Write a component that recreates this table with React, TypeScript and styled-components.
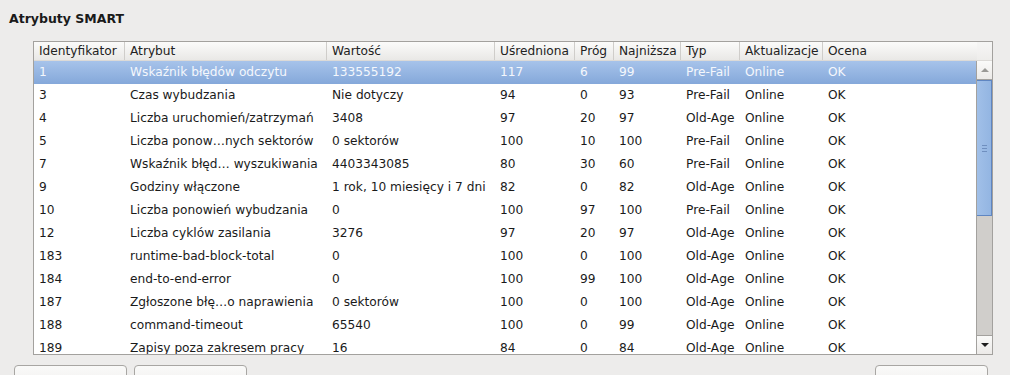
import React from "react";
import styled, { createGlobalStyle } from "styled-components";

type Attr = {
    id: string,
    name: string,
    value: string,
    avg: string,
    thr: string,
    low: string,
    type: string,
    upd: string,
    rating: string
}

const rows: Attr[] = [
    { id: "1", name: "Wskaźnik błędów odczytu", value: "133555192", avg: "117", thr: "6", low: "99", type: "Pre-Fail", upd: "Online", rating: "OK" },
    { id: "3", name: "Czas wybudzania", value: "Nie dotyczy", avg: "94", thr: "0", low: "93", type: "Pre-Fail", upd: "Online", rating: "OK" },
    { id: "4", name: "Liczba uruchomień/zatrzymań", value: "3408", avg: "97", thr: "20", low: "97", type: "Old-Age", upd: "Online", rating: "OK" },
    { id: "5", name: "Liczba ponow…nych sektorów", value: "0 sektorów", avg: "100", thr: "10", low: "100", type: "Pre-Fail", upd: "Online", rating: "OK" },
    { id: "7", name: "Wskaźnik błęd… wyszukiwania", value: "4403343085", avg: "80", thr: "30", low: "60", type: "Pre-Fail", upd: "Online", rating: "OK" },
    { id: "9", name: "Godziny włączone", value: "1 rok, 10 miesięcy i 7 dni", avg: "82", thr: "0", low: "82", type: "Old-Age", upd: "Online", rating: "OK" },
    { id: "10", name: "Liczba ponowień wybudzania", value: "0", avg: "100", thr: "97", low: "100", type: "Pre-Fail", upd: "Online", rating: "OK" },
    { id: "12", name: "Liczba cyklów zasilania", value: "3276", avg: "97", thr: "20", low: "97", type: "Old-Age", upd: "Online", rating: "OK" },
    { id: "183", name: "runtime-bad-block-total", value: "0", avg: "100", thr: "0", low: "100", type: "Old-Age", upd: "Online", rating: "OK" },
    { id: "184", name: "end-to-end-error", value: "0", avg: "100", thr: "99", low: "100", type: "Old-Age", upd: "Online", rating: "OK" },
    { id: "187", name: "Zgłoszone błę…o naprawienia", value: "0 sektorów", avg: "100", thr: "0", low: "100", type: "Old-Age", upd: "Online", rating: "OK" },
    { id: "188", name: "command-timeout", value: "65540", avg: "100", thr: "0", low: "99", type: "Old-Age", upd: "Online", rating: "OK" },
    { id: "189", name: "Zapisy poza zakresem pracy", value: "16", avg: "84", thr: "0", low: "84", type: "Old-Age", upd: "Online", rating: "OK" },
]

const headers = ["Identyfikator", "Atrybut", "Wartość", "Uśredniona", "Próg", "Najniższa", "Typ", "Aktualizacje", "Ocena"]

const COLS = "91px 202px 168px 80px 39px 67px 59px 83px 1fr"

export default function App() {
    return (
        <Page>
            <GlobalStyle />
            <Title>Atrybuty SMART</Title>
            <Frame>
                <HeaderRow>
                    {headers.map((h, i) => (
                        <HeaderCell key={h} $last={i === headers.length - 1}>{h}</HeaderCell>
                    ))}
                    <HeaderCorner />
                </HeaderRow>
                <Body>
                    <Rows>
                        {rows.map((r, i) => (
                            <Row key={r.id} $selected={i === 0}>
                                <Cell>{r.id}</Cell>
                                <Cell>{r.name}</Cell>
                                <Cell>{r.value}</Cell>
                                <Cell>{r.avg}</Cell>
                                <Cell>{r.thr}</Cell>
                                <Cell>{r.low}</Cell>
                                <Cell>{r.type}</Cell>
                                <Cell>{r.upd}</Cell>
                                <Cell>{r.rating}</Cell>
                            </Row>
                        ))}
                    </Rows>
                    <Scrollbar>
                        <Stepper>
                            <Arrow $up />
                        </Stepper>
                        <Thumb>
                            <Grip>
                                <span /><span /><span />
                            </Grip>
                        </Thumb>
                        <Trough />
                        <Stepper $bottom>
                            <Arrow />
                        </Stepper>
                    </Scrollbar>
                </Body>
            </Frame>
            <ButtonBar>
                <Button />
                <Button />
                <Spacer />
                <Button />
            </ButtonBar>
        </Page>
    )
}

const GlobalStyle = createGlobalStyle`
    html, body {
        margin: 0;
        padding: 0;
        background: #edeceb;
        overflow: hidden;
    }
`

const Page = styled.div`
    width: 1010px;
    height: 375px;
    overflow: hidden;
    display: flex;
    flex-direction: column;
    font-family: "DejaVu Sans", sans-serif;
    font-size: 12.2px;
    color: #1a1a1a;
    background: #edeceb;
`

const Title = styled.div`
    font-weight: bold;
    font-size: 12.5px;
    color: #1a1a1a;
    padding: 11px 0 0 9px;
    line-height: 16px;
    height: 41px;
    flex-shrink: 0;
    box-sizing: border-box;
`

const Frame = styled.div`
    margin-left: 33px;
    width: 960px;
    height: 314px;
    flex-shrink: 0;
    box-sizing: border-box;
    border: 1px solid #a3a19e;
    background: #ffffff;
    display: flex;
    flex-direction: column;
    overflow: hidden;
`

const HeaderRow = styled.div`
    display: grid;
    grid-template-columns: ${COLS} 15px;
    height: 18px;
    flex-shrink: 0;
    background: linear-gradient(#fbfbfa, #e9e8e6);
    border-bottom: 1px solid #dcdad7;
`

const HeaderCell = styled.div<{ $last?: boolean }>`
    padding-left: 5px;
    line-height: 18px;
    white-space: nowrap;
    overflow: hidden;
    color: #222;
    border-right: ${p => p.$last ? "none" : "1px solid #cfcdca"};
`

const HeaderCorner = styled.div`
    background: linear-gradient(#f6f6f5, #eeedeb);
`

const Body = styled.div`
    display: flex;
    flex: 1;
    min-height: 0;
`

const Rows = styled.div`
    flex: 1;
    overflow: hidden;
`

const Row = styled.div<{ $selected?: boolean }>`
    display: grid;
    grid-template-columns: ${COLS};
    height: 23px;
    line-height: 23px;
    color: ${p => p.$selected ? "#f4f7fc" : "#1a1a1a"};
    background: ${p => p.$selected ? "linear-gradient(#a7c3ea, #84a8da)" : "#ffffff"};
`

const Cell = styled.div`
    padding-left: 5px;
    white-space: nowrap;
    overflow: hidden;
`

const Scrollbar = styled.div`
    width: 15px;
    flex-shrink: 0;
    display: flex;
    flex-direction: column;
    border-left: 1px solid #a3a19e;
    background: #d2d0cd;
`

const Stepper = styled.div<{ $bottom?: boolean }>`
    height: 18px;
    flex-shrink: 0;
    display: flex;
    align-items: center;
    justify-content: center;
    background: linear-gradient(#fafaf9, #eceae8);
    border-bottom: ${p => p.$bottom ? "none" : "1px solid #a3a19e"};
    border-top: ${p => p.$bottom ? "1px solid #a3a19e" : "none"};
`

const Arrow = styled.div<{ $up?: boolean }>`
    width: 0;
    height: 0;
    border-left: 4px solid transparent;
    border-right: 4px solid transparent;
    ${p => p.$up
        ? "border-bottom: 4px solid #9a9996;"
        : "border-top: 4px solid #1e1e1e;"}
`

const Thumb = styled.div`
    height: 136px;
    flex-shrink: 0;
    box-sizing: border-box;
    border: 1px solid #5f86c2;
    border-left: none;
    background: linear-gradient(90deg, #a1c0e8, #93b5e2);
    display: flex;
    align-items: center;
    justify-content: center;
`

const Grip = styled.div`
    display: flex;
    flex-direction: column;
    gap: 2px;
    span {
        display: block;
        width: 5px;
        height: 1px;
        background: #6f8fbf;
    }
`

const Trough = styled.div`
    flex: 1;
    background: #d0cecb;
`

const ButtonBar = styled.div`
    display: flex;
    gap: 7px;
    padding: 10px 22px 0 14px;
`

const Button = styled.div`
    width: 113px;
    height: 28px;
    box-sizing: border-box;
    border: 1px solid #a8a6a3;
    border-radius: 4px;
    background: linear-gradient(#fafaf9, #eeedeb);
`

const Spacer = styled.div`
    flex: 1;
`
